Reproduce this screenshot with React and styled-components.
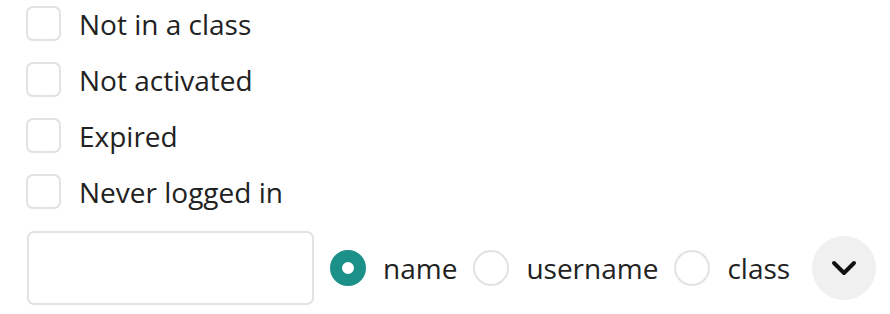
import React from 'react'
import styled, { createGlobalStyle } from 'styled-components'

const GlobalStyle = createGlobalStyle`
  body {
    margin: 0;
    background: #ffffff;
    font-family: "Open Sans", "Liberation Sans", sans-serif;
    color: #222222;
  }
`

const Wrapper = styled.div`
  padding: 6px 0 0 26px;
  display: flex;
  flex-direction: column;
`

const CheckRow = styled.label`
  display: flex;
  align-items: center;
  height: 35px;
  margin-bottom: 21px;
  gap: 18px;
  font-size: 28px;
  cursor: pointer;
`

const Box = styled.span`
  width: 35px;
  height: 35px;
  box-sizing: border-box;
  border: 2px solid #e2e2e2;
  border-radius: 7px;
  background: #ffffff;
`

const SearchRow = styled.div`
  display: flex;
  align-items: center;
  margin-top: 1px;
`

const Input = styled.input`
  width: 287px;
  height: 74px;
  box-sizing: border-box;
  border: 2px solid #e2e2e2;
  border-radius: 7px;
  margin: 0 16px 0 1px;
  font-size: 26px;
  outline: none;
`

const RadioLabel = styled.label`
  display: flex;
  align-items: center;
  gap: 17px;
  margin-right: 16px;
  font-size: 28px;
  cursor: pointer;
`

const Dot = styled.span`
  width: 36px;
  height: 36px;
  box-sizing: border-box;
  border-radius: 50%;
  border: ${props => (props.checked ? '12px solid #1a9088' : '2px solid #e2e2e2')};
  background: #ffffff;
`

const ToggleButton = styled.button`
  width: 64px;
  height: 64px;
  border-radius: 50%;
  border: none;
  background: #f0f0f0;
  display: flex;
  align-items: center;
  justify-content: center;
  margin-left: 6px;
  padding: 0;
  cursor: pointer;
`

const filters = ['Not in a class', 'Not activated', 'Expired', 'Never logged in']
const fields = ['name', 'username', 'class']

const App = () => {
  const [field, setField] = React.useState('name')
  return (
    <>
      <GlobalStyle />
      <Wrapper>
        {filters.map(item => (
          <CheckRow key={item}>
            <Box />
            {item}
          </CheckRow>
        ))}
        <SearchRow>
          <Input type='text' />
          {fields.map(item => (
            <RadioLabel key={item} onClick={() => setField(item)}>
              <Dot checked={field === item} />
              {item}
            </RadioLabel>
          ))}
          <ToggleButton>
            <svg width='26' height='16' viewBox='0 0 26 16' fill='none'>
              <path d='M3 3 L13 13 L23 3' stroke='#111' strokeWidth='4' strokeLinecap='round' strokeLinejoin='round' />
            </svg>
          </ToggleButton>
        </SearchRow>
      </Wrapper>
    </>
  )
}

export default App
